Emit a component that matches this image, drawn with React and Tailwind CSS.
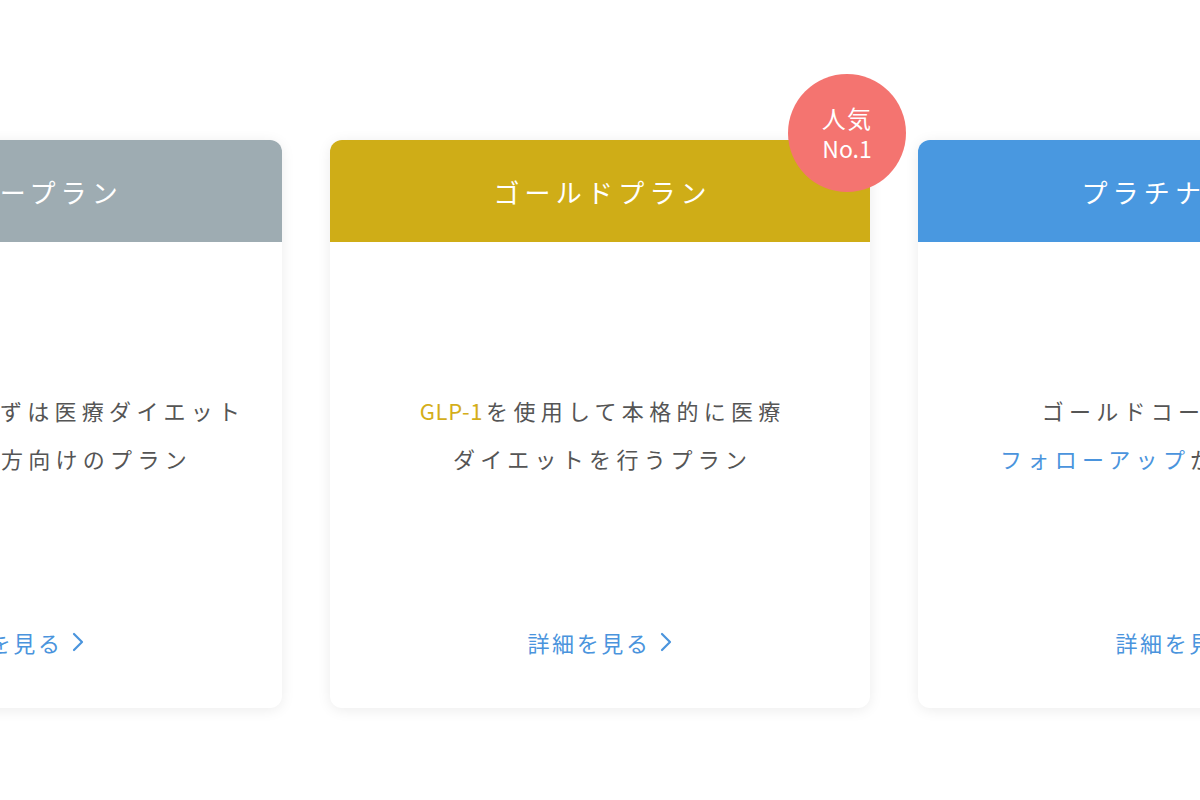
import React from 'react'

const plans = [
    {
        name: 'シルバープラン',
        head: 'bg-[#9eacb2]',
        lines: [
            [{ t: '費用を抑えて、まずは医療ダイエット' }],
            [{ t: 'をはじめたい方向けのプラン' }],
        ],
    },
    {
        name: 'ゴールドプラン',
        head: 'bg-[#cfad17]',
        badge: true,
        lines: [
            [{ t: 'GLP-1', c: 'text-[#d4ae1a] tracking-[0.03em] mr-[3px]' }, { t: 'を使用して本格的に医療' }],
            [{ t: 'ダイエットを行うプラン' }],
        ],
    },
    {
        name: 'プラチナプラン',
        head: 'bg-[#4998e0]',
        lines: [
            [{ t: 'ゴールドコースに加えて' }],
            [{ t: 'フォローアップ', c: 'text-[#4a94dd]' }, { t: 'が手厚いプラン' }],
        ],
    },
]

function Chevron() {
    return (
        <svg width="14" height="22" viewBox="0 0 14 22" fill="none" className="ml-[8px]">
            <path d="M3 3l8 8-8 8" stroke="#4a94dd" strokeWidth="2.2" strokeLinecap="round" strokeLinejoin="round" />
        </svg>
    )
}

function PlanCard({ plan }) {
    return (
        <div className="relative w-[540px] shrink-0 rounded-xl bg-white shadow-[0_2px_14px_rgba(0,0,0,0.08)]">
            <div className={`${plan.head} h-[102px] rounded-t-xl flex items-center justify-center`}>
                <span className="text-white text-[26px] tracking-[0.2em] pl-[0.2em]">{plan.name}</span>
            </div>

            {plan.badge && (
                <div className="absolute -top-[66px] -right-[36px] w-[118px] h-[118px] rounded-full bg-[#f47470] flex flex-col items-center justify-center text-white leading-[31px]">
                    <span className="text-[24px] tracking-[0.05em]">人気</span>
                    <span className="text-[23px]">No.1</span>
                </div>
            )}

            <div className="flex flex-col items-center pt-[144px] pb-[50px]">
                <div className="text-center text-[22px] leading-[48px] tracking-[0.24em] text-[#555555]">
                    {plan.lines.map((line, i) => (
                        <p key={i} className="whitespace-nowrap pl-[0.24em]">
                            {line.map((seg, j) => (
                                <span key={j} className={seg.c}>{seg.t}</span>
                            ))}
                        </p>
                    ))}
                </div>
                <a className="mt-[144px] flex items-center h-[32px] text-[22px] tracking-[0.12em] text-[#4a94dd]">
                    詳細を見る
                    <Chevron />
                </a>
            </div>
        </div>
    )
}

export default function App() {
    return (
        <div
            className="w-full h-[800px] overflow-hidden bg-white flex items-start justify-center gap-[48px] pt-[140px]"
            style={{ fontFamily: '"Noto Sans CJK JP", "Noto Sans", sans-serif' }}
        >
            {plans.map((plan) => (
                <PlanCard key={plan.name} plan={plan} />
            ))}
        </div>
    )
}
